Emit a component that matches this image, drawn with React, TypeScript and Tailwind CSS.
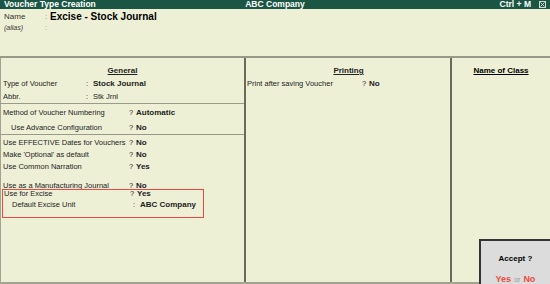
import React from "react";

type RowProps = {
  label: string;
  sep?: string;
  value: string;
  plain?: boolean;
  indent?: boolean;
  labelW?: string;
  className?: string;
};

function Row({
  label,
  sep = "?",
  value,
  plain,
  indent,
  labelW = "w-[126px]",
  className = "h-[12px] leading-[12px]",
}: RowProps) {
  return (
    <div className={`flex whitespace-nowrap ${className}`}>
      <span className={`${labelW} shrink-0 text-[7.5px] ${indent ? "pl-[8px]" : ""}`}>{label}</span>
      <span className="w-[7px] shrink-0 text-[7.5px]">{sep}</span>
      <span className={plain ? "text-[7.5px]" : "font-bold text-[8px]"}>{value}</span>
    </div>
  );
}

function Heading({ children }: { children: React.ReactNode }) {
  return (
    <div className="h-[13px] leading-[13px] text-center font-bold text-[8px] underline underline-offset-[1px]">
      {children}
    </div>
  );
}

export default function App() {
  return (
    <div className="relative w-[550px] h-[284px] overflow-hidden bg-[#eef0d6] text-[8px] text-black font-['Liberation_Sans',Arial,sans-serif] flex flex-col">
      {/* title bar */}
      <div className="h-[9px] bg-[#1b5544] text-white font-bold text-[8.5px] leading-[9px] grid grid-cols-3 px-[4px] whitespace-nowrap">
        <span>Voucher Type Creation</span>
        <span className="text-center">ABC Company</span>
        <div className="flex justify-end items-center gap-[8px]">
          <span>Ctrl + M</span>
          <span className="w-[7px] h-[7px] border border-[#cfd8d2] flex items-center justify-center">
            <svg viewBox="0 0 5 5" className="w-[5px] h-[5px]">
              <path d="M0.5 0.5 L4.5 4.5 M4.5 0.5 L0.5 4.5" stroke="#cfd8d2" strokeWidth="1" />
            </svg>
          </span>
        </div>
      </div>

      {/* header */}
      <div className="h-[47px] px-[4px] pt-[3px]">
        <div className="flex h-[10px] leading-[10px] whitespace-nowrap">
          <span className="w-[41px] text-[8px] text-[#333]">Name</span>
          <span className="w-[5px] text-[#888]">:</span>
          <span className="text-[10px] font-bold">Excise - Stock Journal</span>
        </div>
        <div className="flex h-[9px] leading-[9px] mt-[1px] text-[7px] italic text-[#333]">
          <span className="w-[41px]">(alias)</span>
          <span className="text-[#888] not-italic">:</span>
        </div>
      </div>
      <div className="h-[2px] bg-[#9a9a88]" />

      {/* body */}
      <div className="flex-1 flex border-l border-b-2 border-[#a3a392]">
        {/* general */}
        <div className="w-[245px] border-r-2 border-[#6b6b5c] text-[#222]">
          <div className="pt-[6px] px-[2px] border-b border-[#9a9a88]">
            <Heading>General</Heading>
            <Row label="Type of Voucher" sep=":" value="Stock Journal" labelW="w-[83px]" className="h-[13px] leading-[13px]" />
            <Row label="Abbr." sep=":" value="Stk Jrnl" plain labelW="w-[83px]" className="h-[13px] leading-[13px]" />
          </div>
          <div className="pt-[2px] px-[2px] flex flex-col gap-[2px] border-b border-[#9a9a88]">
            <Row label="Method of Voucher Numbering" value="Automatic" className="h-[13px] leading-[13px]" />
            <Row label="Use Advance Configuration" value="No" indent className="h-[13px] leading-[13px]" />
          </div>
          <div className="pt-[2px] px-[2px]">
            <Row label="Use EFFECTIVE Dates for Vouchers" value="No" />
            <Row label="Make 'Optional' as default" value="No" />
            <Row label="Use Common Narration" value="Yes" />
            <Row label="Use as a Manufacturing Journal" value="No" className="mt-[7px] h-[9px] leading-[12px] overflow-hidden" />
          </div>
          <div className="ml-[1px] w-[202px] border-[1px] [border-color:#f04848] pb-[6px] px-[1px]">
            <Row label="Use for Excise" value="Yes" className="h-[7px] leading-[7px]" />
            <Row label="Default Excise Unit" sep=":" value="ABC Company" indent labelW="w-[129px]" className="mt-[2px] h-[12px] leading-[12px]" />
          </div>
        </div>

        {/* printing */}
        <div className="w-[206px] border-r-2 border-[#6b6b5c] pt-[6px] pl-[1px] text-[#222]">
          <Heading>Printing</Heading>
          <Row label="Print after saving Voucher" value="No" labelW="w-[115px]" className="h-[13px] leading-[13px]" />
        </div>

        {/* name of class */}
        <div className="flex-1 pt-[6px]">
          <Heading>Name of Class</Heading>
        </div>
      </div>

      {/* accept box */}
      <div className="absolute right-0 bottom-0 w-[71px] h-[45px] bg-[#dcdcdc] border-2 border-b-0 border-r-0 border-[#333] flex flex-col items-center">
        <div className="mt-[12px] font-bold text-[8px]">Accept ?</div>
        <div className="mt-[10px] text-[9px] leading-[9px] flex gap-[3px] items-baseline">
          <span className="font-bold text-[#ea4a3f]">Yes</span>
          <span className="text-[7px] text-[#999]">or</span>
          <span className="font-bold text-[#ea4a3f]">No</span>
        </div>
      </div>
    </div>
  );
}
